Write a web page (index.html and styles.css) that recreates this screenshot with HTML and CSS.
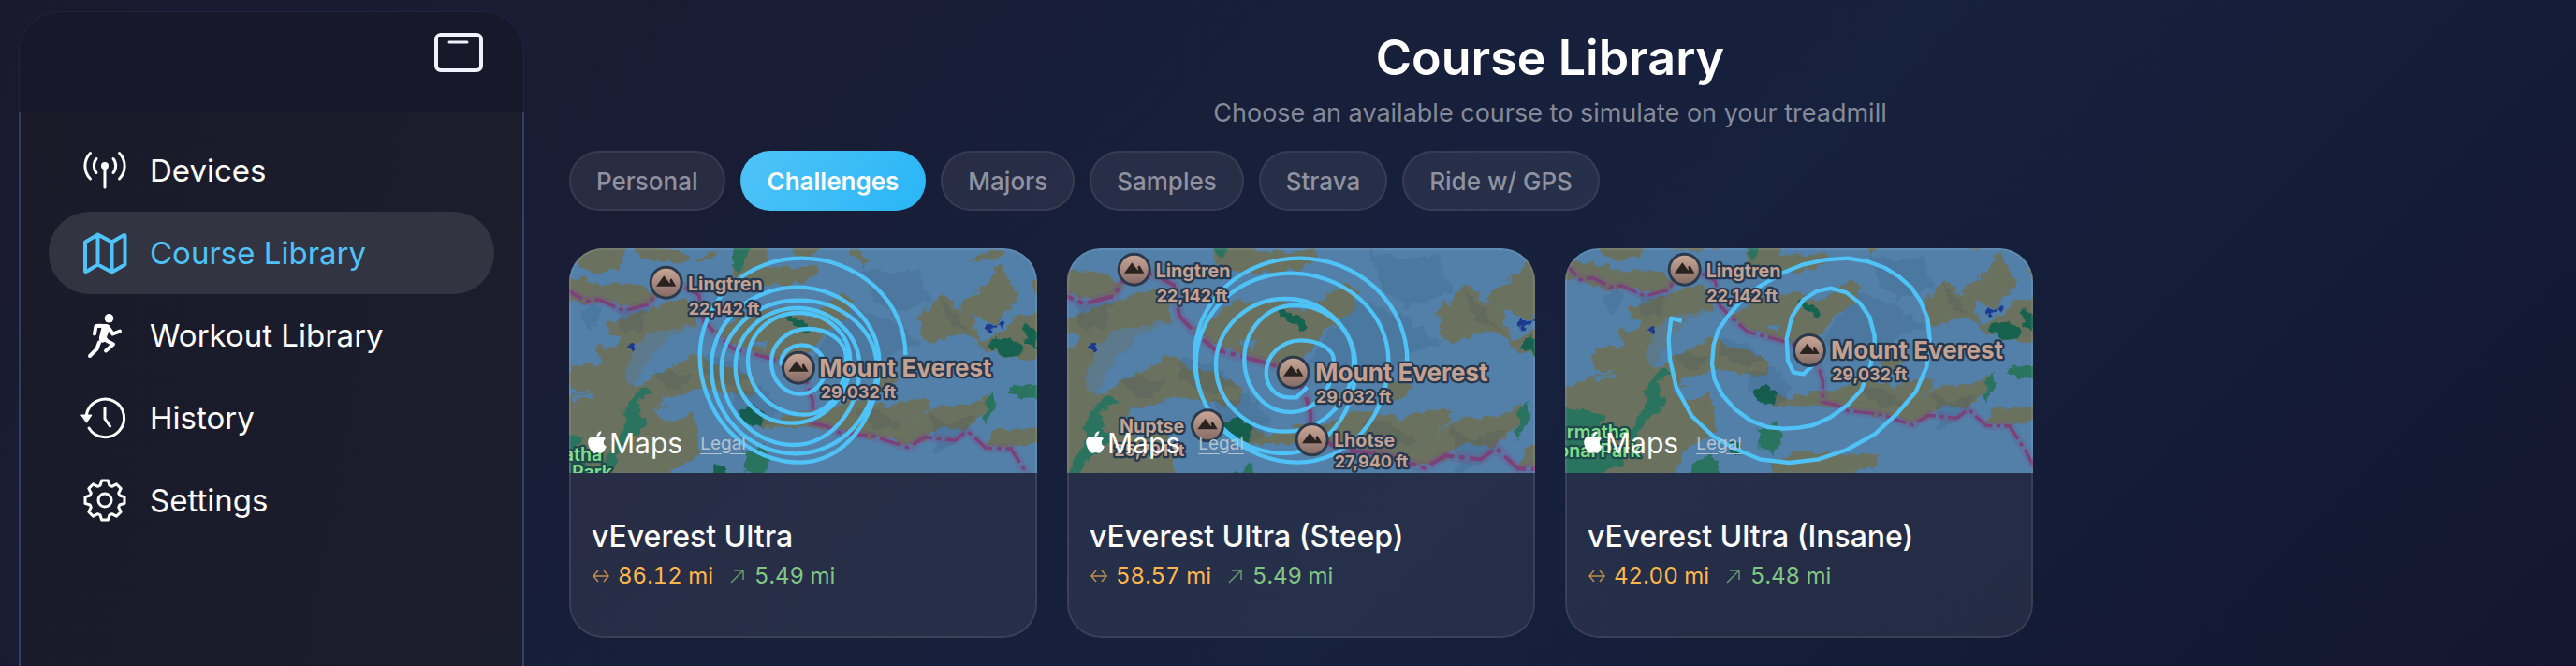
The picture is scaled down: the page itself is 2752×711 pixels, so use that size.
FILE: index.html
```html
<!DOCTYPE html>
<html lang="en">
<head>
  <meta charset="utf-8">
  <meta name="viewport" content="width=device-width, initial-scale=1.0">
  <title>Course Library</title>
  <link rel="stylesheet" href="styles.css">
</head>
<body>
  <!-- Shared map artwork -->
  <svg class="defs" width="0" height="0" aria-hidden="true">
    <defs>
      <linearGradient id="peakFill" x1="0" y1="0" x2="0" y2="1">
        <stop offset="0" stop-color="#c8a696"/>
        <stop offset="1" stop-color="#866c66"/>
      </linearGradient>
      <filter id="rough" x="-5%" y="-5%" width="110%" height="110%">
        <feTurbulence type="fractalNoise" baseFrequency="0.03" numOctaves="4" seed="4"/>
        <feDisplacementMap in="SourceGraphic" scale="36" xChannelSelector="R" yChannelSelector="G"/>
      </filter>
      <g id="peak">
        <circle r="54" fill="#2c394b"/>
        <circle r="45" fill="url(#peakFill)"/>
        <path d="M-32 12 L-7 -22 L8 -2 L14 4 L11 -8 L17 -13 L32 12Z" fill="#29231f"/>
      </g>
      <g id="terrain">
        <rect x="-120" y="-60" width="1800" height="960" fill="#5280a9"/>
        <g filter="url(#rough)">
          <g fill="#6a715f">
            <path d="M40 55 L90 20 L215 20 L180 95 L100 112 L60 85Z"/>
            <path d="M225 35 L260 20 L380 38 L405 70 L380 82 L320 70 L260 64Z"/>
            <path d="M420 65 L500 35 L495 50 L440 75Z"/>
            <path d="M-100 120 L0 115 L60 125 L120 150 L190 140 L270 150 L305 180 L290 205 L230 212 L150 202 L60 208 L-20 175 L-100 170Z"/>
            <path d="M552 10 L655 10 L660 85 L740 95 L810 80 L822 105 L790 135 L700 152 L620 150 L545 115Z"/>
            <path d="M735 10 L850 10 L800 55 L750 58Z"/>
            <path d="M920 30 L965 40 L982 70 L965 95 L945 62Z"/>
            <path d="M1305 72 L1350 40 L1430 35 L1400 62Z"/>
            <path d="M148 275 L215 250 L330 205 L400 192 L430 230 L432 280 L350 312 L290 372 L232 470 L262 462 L300 430 L350 418 L420 365 L480 400 L560 420 L622 450 L612 500 L540 500 L460 480 L330 512 L300 540 L340 530 L355 585 L420 560 L440 630 L440 690 L330 760 L280 900 L-120 900 L-120 560 L24 500 L100 492 L30 480 L24 410 L130 400 L110 350 L150 330Z"/>
            <path d="M480 300 L530 280 L590 230 L720 215 L790 250 L835 215 L905 175 L940 195 L925 228 L880 275 L820 325 L770 400 L690 395 L640 370 L560 345Z"/>
            <path d="M630 560 L700 575 L760 560 L850 540 L950 515 L1050 535 L1130 515 L1195 515 L1145 565 L1210 535 L1310 530 L1370 492 L1375 520 L1320 600 L1290 612 L1220 602 L1130 665 L1050 640 L980 632 L880 615 L780 600 L640 606Z"/>
            <path d="M1000 440 L1060 432 L1078 450 L1040 485 L1005 482Z"/>
            <path d="M1275 230 L1300 185 L1360 150 L1405 85 L1425 120 L1455 150 L1455 200 L1400 270 L1330 255Z"/>
            <path d="M1148 250 L1215 180 L1250 195 L1262 218 L1315 250 L1342 320 L1250 308 L1205 332 L1152 322Z"/>
            <path d="M1300 300 L1350 325 L1450 270 L1445 240 L1600 235 L1600 385 L1440 380 L1370 360Z"/>
            <path d="M1505 130 L1600 100 L1600 220 L1520 180Z"/>
            <path d="M1360 660 L1392 612 L1540 604 L1620 620 L1530 648 L1440 668Z"/>
            <path d="M620 790 L720 760 L1000 770 L980 810 L860 850 L640 850Z"/>
          </g>
          <g fill="#5280a9">
            <path d="M235 340 L290 300 L440 270 L440 290 L350 320 L290 380 L232 470 L200 440Z" opacity="0.6"/>
            <path d="M300 545 L390 530 L420 560 L360 590 L320 575Z"/>
            <path d="M620 325 L655 330 L650 352 L628 345Z"/>
            <path d="M30 505 L105 495 L100 510 L40 515Z"/>
            <path d="M140 300 L180 320 L170 345 L130 350Z"/>
          </g>
          <g fill="#29735f">
            <path d="M200 620 L200 550 L250 480 L292 486 L238 520 L270 600 L215 640 L160 725 L120 740Z"/>
            <path d="M550 20 L612 25 L585 70 L562 115 L548 85Z"/>
            <path d="M1430 488 L1480 465 L1620 470 L1600 520 L1500 515Z"/>
            <path d="M1350 570 L1368 515 L1392 485 L1392 530 L1370 568 L1360 600Z"/>
            <path d="M585 690 L650 655 L670 700 L640 770 L590 740Z"/>
            <path d="M-100 610 L20 620 L70 640 L30 690 L120 750 L130 800 L-100 900Z"/>
            <path d="M360 800 L430 770 L470 850 L360 860Z"/>
          </g>
          <g fill="#14624f">
            <path d="M568 550 L600 535 L648 560 L638 598 L605 600Z"/>
            <path d="M722 250 L750 245 L790 275 L790 302 L755 285Z"/>
            <path d="M1370 330 L1395 315 L1470 335 L1482 370 L1440 378 L1372 355Z"/>
            <path d="M1490 268 L1530 300 L1530 350 L1482 335Z"/>
            <path d="M490 725 L525 735 L525 770 L490 760Z"/>
          </g>
          <g fill="#1f3a8f">
            <path d="M212 345 L228 334 L238 350 L226 362Z"/>
            <path d="M1366 270 L1388 268 L1380 298 L1364 298Z"/>
            <path d="M1398 270 L1422 264 L1412 282Z"/>
          </g>
        </g>
        <!-- relief shading -->
        <g fill="#1e3046" opacity="0.1" filter="url(#rough)">
          <path d="M960 90 L1050 110 L1140 100 L1150 150 L1190 190 L1130 220 L1060 240 L1000 200 L980 150Z"/>
          <path d="M850 310 L930 220 L1060 260 L1150 340 L1070 360 L1010 420 L880 420 L800 390Z"/>
          <path d="M540 490 L640 470 L700 540 L650 600 L560 560Z"/>
          <path d="M170 220 L280 220 L250 290 L200 300Z"/>
          <path d="M470 370 L560 400 L610 450 L520 470 L450 420Z"/>
          <path d="M930 540 L1010 550 L1090 600 L1000 610 L960 570Z"/>
          <path d="M1180 560 L1240 590 L1330 560 L1300 620 L1200 690Z"/>
          <path d="M1210 185 L1260 240 L1320 300 L1240 270Z"/>
          <path d="M300 420 L420 440 L380 480 L310 460Z"/>
          <path d="M60 230 L130 210 L90 300Z"/>
        </g>
        <path class="border-glow" d="M-80 110 L-20 175 L24 168 L80 200 L120 195 L200 230 L280 210 L300 175 L335 140 L395 155 L440 180 L455 262 L490 300 L550 352 L620 370 L759 408 L790 470 L805 520 L805 590 L850 600 L890 620 L1000 632 L1110 668 L1165 635 L1260 645 L1300 615 L1360 670 L1440 672 L1490 750 L1540 840"/>
        <path class="border-line" d="M-80 110 L-20 175 L24 168 L80 200 L120 195 L200 230 L280 210 L300 175 L335 140 L395 155 L440 180 L455 262 L490 300 L550 352 L620 370 L759 408 L790 470 L805 520 L805 590 L850 600 L890 620 L1000 632 L1110 668 L1165 635 L1260 645 L1300 615 L1360 670 L1440 672 L1490 750 L1540 840"/>
      </g>
      <symbol id="apple" viewBox="0 0 20 24">
        <path d="M14.2 0.2 C14.4 1.9 13.7 3.4 12.8 4.4 C11.9 5.4 10.7 6 9.6 5.9 C9.4 4.4 10.1 2.9 11 1.9 C11.9 1 13.2 0.3 14.2 0.2Z M19.2 8.2 C17.7 9.1 16.8 10.5 16.8 12.2 C16.8 14.2 18 15.8 19.8 16.5 C19.3 18.2 18.4 19.9 17.4 21.3 C16.5 22.6 15.6 23.7 14.2 23.7 C12.8 23.7 12.3 22.9 10.6 22.9 C9 22.9 8.3 23.7 7 23.7 C5.6 23.7 4.6 22.5 3.7 21.2 C1.8 18.7 0.2 15.2 0.2 12 C0.2 8.3 2.7 6.3 5.2 6.3 C6.7 6.3 8 7.2 9.5 7.2 C10.7 7.2 12.2 6.2 14.1 6.2 C16.2 6.2 18 6.9 19.2 8.2Z" fill="#fff"/>
      </symbol>
      <symbol id="distance" viewBox="0 0 20 20">
        <path d="M2 10 H18 M7 4 L2 10 L7 16 M13 4 L18 10 L13 16"/>
      </symbol>
      <symbol id="climb" viewBox="0 0 20 20">
        <path d="M3 17 L16 4 M6 4 H16 V14"/>
      </symbol>
    </defs>
  </svg>

  <div class="app">
    <!-- Sidebar -->
    <aside class="sidebar">
      <div class="sidebar-top">
        <button class="toggle" aria-label="Toggle sidebar">
          <svg viewBox="0 0 52 42" width="52" height="42">
            <rect x="2" y="2" width="48" height="38" rx="5" stroke-width="4"/>
            <path d="M16 10 H35" stroke-width="3"/>
          </svg>
        </button>
      </div>
      <nav class="nav">
        <a class="nav-item" href="#devices">
          <svg class="icon" viewBox="0 0 48 48">
            <circle cx="24" cy="19" r="4" fill="currentColor" stroke="none"/>
            <path d="M24 20 V42" />
            <path d="M15 11.5 C11.5 15.5 11.5 22.5 15 26.5 M33 11.5 C36.5 15.5 36.5 22.5 33 26.5 M8.5 5.5 C1 13 1 25.5 8.5 33 M39.5 5.5 C47 13 47 25.5 39.5 33"/>
          </svg>
          Devices
        </a>
        <a class="nav-item active" href="#courses">
          <svg class="icon map-icon" viewBox="0 0 48 48">
            <path d="M3 12.5 L16.5 4.5 L31.5 12.5 L44 5.2 Q45.5 4.5 45.5 6 V36.5 L31.5 44.5 L16.5 36.5 L4.5 43.8 Q3 44.5 3 43Z M16.5 4.5 V36.5 M31.5 12.5 V44.5"/>
          </svg>
          Course Library
        </a>
        <a class="nav-item" href="#workouts">
          <svg class="icon" viewBox="0 0 48 48">
            <circle cx="28.5" cy="5.8" r="4.8" fill="currentColor" stroke="none"/>
            <path d="M15 12 L26 12 Q29 13 29.5 16 L26 26 L28 29 L21 32 Q17 30 18 26 L20.5 15.5 L14 16Z" fill="currentColor" stroke="none"/>
            <path d="M20 13.8 L14.5 14 L13 22.5 M27 14.5 L32.5 22.5 L40 19.6 M21 27 L33 33.5 L25 40.5" stroke-width="4"/>
            <path d="M18 31.5 L15.5 38.5 L8 46" stroke-width="4"/>
          </svg>
          Workout Library
        </a>
        <a class="nav-item" href="#history">
          <svg class="icon" viewBox="0 0 48 48">
            <path d="M7 35 A20.3 20.3 0 1 0 4.3 21"/>
            <path d="M24 13.5 V25 L29.5 33"/>
            <path d="M-1 21 H10 L4.6 29Z" fill="currentColor" stroke-width="1"/>
          </svg>
          History
        </a>
        <a class="nav-item" href="#settings">
          <svg class="icon" viewBox="0 0 48 48">
            <path d="M19 8.2 L20.6 3 H27.4 L29 8.2 L31.6 9.3 L36.4 6.8 L41.2 11.6 L38.7 16.4 L39.8 19 L45 20.6 V27.4 L39.8 29 L38.7 31.6 L41.2 36.4 L36.4 41.2 L31.6 38.7 L29 39.8 L27.4 45 H20.6 L19 39.8 L16.4 38.7 L11.6 41.2 L6.8 36.4 L9.3 31.6 L8.2 29 L3 27.4 V20.6 L8.2 19 L9.3 16.4 L6.8 11.6 L11.6 6.8 L16.4 9.3Z"/>
            <circle cx="24" cy="24" r="7"/>
          </svg>
          Settings
        </a>
      </nav>
    </aside>

    <!-- Main content -->
    <main class="main">
      <header class="header">
        <h1>Course Library</h1>
        <p>Choose an available course to simulate on your treadmill</p>
      </header>

      <div class="filters">
        <button class="chip">Personal</button>
        <button class="chip selected">Challenges</button>
        <button class="chip">Majors</button>
        <button class="chip">Samples</button>
        <button class="chip">Strava</button>
        <button class="chip">Ride w/ GPS</button>
      </div>

      <div class="courses">
        <!-- vEverest Ultra -->
        <article class="card">
          <div class="map">
            <svg class="map-art" viewBox="24 30 1500 720" preserveAspectRatio="xMidYMid slice">
              <use href="#terrain"/>
              <path class="route" d="M1102 372 A334 310 0 0 0 768 62 A325 313 0 0 0 443 375 A322 341 0 0 0 765 716 A253 321 0 0 0 1018 395 A263 240 0 0 0 755 155 A275 255 0 0 0 480 410 A270 278 0 0 0 750 688 A260 278 0 0 0 1010 410 A250 213 0 0 0 760 197 A248 218 0 0 0 512 415 A233 245 0 0 0 745 660 A210 250 0 0 0 955 410 A200 188 0 0 0 755 222 A198 188 0 0 0 557 410 A178 180 0 0 0 735 590 A190 200 0 0 0 925 390 A165 153 0 0 0 760 237 A163 153 0 0 0 597 390 A183 173 0 0 0 780 563 A132 183 0 0 0 912 380 A122 92 0 0 0 790 288 A118 107 0 0 0 672 395 A93 102 0 0 0 765 497 A80 82 0 0 0 845 415 A75 75 0 0 0 770 340 A67 60 0 0 0 703 400 L759 413"/>
              <use href="#peak" x="335" y="140"/>
              <text class="place" x="405" y="165">Lingtren</text>
              <text class="height" x="407" y="243">22,142 ft</text>
              <use href="#peak" x="759" y="413"/>
              <text class="place big" x="826" y="440">Mount Everest</text>
              <text class="height" x="830" y="509">29,032 ft</text>
              <text class="park" x="130" y="711">atha</text>
              <text class="park" x="162" y="768">Park</text>
            </svg>
            <div class="attribution">
              <svg class="apple" width="20" height="24"><use href="#apple"/></svg>
              <span class="maps">Maps</span>
              <a class="legal" href="#legal">Legal</a>
            </div>
          </div>
          <div class="card-body">
            <h2>vEverest Ultra</h2>
            <div class="stats">
              <span class="stat distance"><svg width="20" height="20"><use href="#distance"/></svg>86.12 mi</span>
              <span class="stat climb"><svg width="20" height="20"><use href="#climb"/></svg>5.49 mi</span>
            </div>
          </div>
        </article>

        <!-- vEverest Ultra (Steep) -->
        <article class="card">
          <div class="map">
            <svg class="map-art" viewBox="30 30 1500 720" preserveAspectRatio="xMidYMid slice">
              <use href="#terrain" transform="translate(-156 -68) scale(1.2)"/>
              <path class="route" d="M1120 390 A345 328 0 0 0 775 62 A337 316 0 0 0 438 378 A332 338 0 0 0 770 716 A290 326 0 0 0 1060 390 A315 280 0 0 0 745 110 A302 290 0 0 0 443 400 A282 287 0 0 0 725 687 A230 277 0 0 0 955 410 A225 218 0 0 0 730 192 A223 213 0 0 0 507 405 A223 212 0 0 0 730 617 A218 227 0 0 0 948 390 A188 177 0 0 0 760 213 A162 172 0 0 0 598 385 A147 170 0 0 0 745 555 A140 165 0 0 0 885 390 A105 65 0 0 0 780 325 A112 105 0 0 0 668 430 A72 78 0 0 0 740 508 L765 508 L800 475"/>
              <use href="#peak" x="245" y="98"/>
              <text class="place" x="314" y="124">Lingtren</text>
              <text class="height" x="317" y="202">22,142 ft</text>
              <use href="#peak" x="755" y="428"/>
              <text class="place big" x="826" y="457">Mount Everest</text>
              <text class="height" x="828" y="525">29,032 ft</text>
              <use href="#peak" x="480" y="598"/>
              <text class="place end" x="406" y="620">Nuptse</text>
              <text class="height end" x="406" y="697">25,791 ft</text>
              <use href="#peak" x="815" y="643"/>
              <text class="place" x="885" y="665">Lhotse</text>
              <text class="height" x="887" y="732">27,940 ft</text>
            </svg>
            <div class="attribution">
              <svg class="apple" width="20" height="24"><use href="#apple"/></svg>
              <span class="maps">Maps</span>
              <a class="legal" href="#legal">Legal</a>
            </div>
          </div>
          <div class="card-body">
            <h2>vEverest Ultra (Steep)</h2>
            <div class="stats">
              <span class="stat distance"><svg width="20" height="20"><use href="#distance"/></svg>58.57 mi</span>
              <span class="stat climb"><svg width="20" height="20"><use href="#climb"/></svg>5.49 mi</span>
            </div>
          </div>
        </article>

        <!-- vEverest Ultra (Insane) -->
        <article class="card">
          <div class="map">
            <svg class="map-art" viewBox="36 30 1500 720" preserveAspectRatio="xMidYMid slice">
              <use href="#terrain" transform="translate(103 -34) scale(0.943)"/>
              <path class="route" d="M410 263 L376 254 L368 320 L372 385 L392 475 L442 567 L510 632 L580 672 L660 706 L755 717 L848 706 L940 675 L1028 626 L1100 560 L1160 490 L1195 410 L1205 320 L1198 255 L1175 200 L1145 155 L1105 120 L1060 92 L1005 72 L940 62 L870 67 L800 82 L735 108 L655 155 L600 200 L560 245 L528 290 L512 340 L507 400 L515 450 L540 500 L580 545 L630 582 L685 603 L735 608 L785 605 L830 597 L885 572 L940 533 L985 485 L1012 420 L1028 340 L1028 310 L1012 250 L980 205 L938 172 L888 158 L842 168 L800 195 L763 248 L746 320 L750 390 L768 428 L800 433 L830 405"/>
              <use href="#peak" x="419" y="98"/>
              <text class="place" x="488" y="124">Lingtren</text>
              <text class="height" x="490" y="202">22,142 ft</text>
              <use href="#peak" x="819" y="357"/>
              <text class="place big" x="888" y="385">Mount Everest</text>
              <text class="height" x="891" y="453">29,032 ft</text>
              <text class="park" x="243" y="640">rmatha</text>
              <text class="park" x="278" y="698">onal Park</text>
            </svg>
            <div class="attribution">
              <svg class="apple" width="20" height="24"><use href="#apple"/></svg>
              <span class="maps">Maps</span>
              <a class="legal" href="#legal">Legal</a>
            </div>
          </div>
          <div class="card-body">
            <h2>vEverest Ultra (Insane)</h2>
            <div class="stats">
              <span class="stat distance"><svg width="20" height="20"><use href="#distance"/></svg>42.00 mi</span>
              <span class="stat climb"><svg width="20" height="20"><use href="#climb"/></svg>5.48 mi</span>
            </div>
          </div>
        </article>
      </div>
    </main>
  </div>
</body>
</html>
```

FILE: styles.css
```css
* {
  box-sizing: border-box;
}

body {
  margin: 0;
  font-family: Inter, "Liberation Sans", sans-serif;
  color: #ffffff;
  background: linear-gradient(135deg, #1a1a2e 0%, #16213e 60%, #13162e 100%);
}

h1, h2, p {
  margin: 0;
}

.defs {
  position: absolute;
}

.app {
  display: flex;
  min-height: 100vh;
}

/* Sidebar */
.sidebar {
  display: flex;
  flex-direction: column;
  flex: 0 0 540px;
  margin: 12px 0 0 20px;
}

.sidebar-top {
  display: flex;
  justify-content: flex-end;
  align-items: flex-start;
  height: 108px;
  padding: 22px 43px;
  background: #18182b;
  border: 1px solid #222240;
  border-bottom: none;
  border-radius: 44px 44px 0 0;
}

.toggle {
  padding: 0;
  background: none;
  border: none;
  cursor: pointer;
}

.toggle svg {
  display: block;
  fill: none;
  stroke: #f2f2ff;
  stroke-linecap: round;
}

.nav {
  flex: 1;
  padding: 18px 30px;
  background: linear-gradient(100deg, #1a1a29, #1b1e2d);
  border-left: 2px solid #363a66;
  border-right: 2px solid #363f68;
}

.nav-item {
  display: flex;
  align-items: center;
  gap: 24px;
  height: 88px;
  padding: 0 36px;
  border-radius: 44px;
  font-size: 33px;
  color: #ffffff;
  text-decoration: none;
}

.nav-item.active {
  background: #323442;
  color: #4fc3f7;
}

.icon {
  width: 48px;
  height: 48px;
  overflow: visible;
  fill: none;
  stroke: currentColor;
  stroke-width: 3;
  stroke-linecap: round;
  stroke-linejoin: round;
}

.map-icon {
  stroke-width: 4;
}

/* Main content */
.main {
  flex: 1;
  padding: 28px 48px 30px;
}

.header {
  text-align: center;
}

h1 {
  font-size: 52px;
  line-height: 68px;
  font-weight: 600;
}

.header p {
  margin-top: 8px;
  font-size: 27px;
  line-height: 34px;
  color: #868a98;
}

.filters {
  display: flex;
  flex-wrap: wrap;
  gap: 16px;
  margin-top: 23px;
}

.chip {
  height: 64px;
  padding: 0 27px;
  font-family: inherit;
  font-size: 26px;
  font-weight: 500;
  color: #9092a0;
  background: rgba(255, 255, 255, 0.07);
  border: 2px solid rgba(255, 255, 255, 0.07);
  border-radius: 32px;
  cursor: pointer;
}

.chip.selected {
  color: #ffffff;
  font-weight: 600;
  background: linear-gradient(120deg, #4fc3f7, #29b6f6);
  background-origin: border-box;
  border-color: transparent;
}

/* Course cards */
.courses {
  display: grid;
  grid-template-columns: repeat(auto-fill, 500px);
  gap: 32px;
  margin-top: 40px;
}

.card {
  position: relative;
  overflow: hidden;
  background: rgba(255, 255, 255, 0.07);
  border-radius: 36px;
}

/* Outline runs over the map as well */
.card::after {
  content: "";
  position: absolute;
  inset: 0;
  border: 2px solid rgba(255, 255, 255, 0.09);
  border-radius: 36px;
  pointer-events: none;
}

.map {
  position: relative;
  height: 240px;
}

.map-art {
  display: block;
  width: 100%;
  height: 100%;
}

.border-glow {
  fill: none;
  stroke: #7a4a86;
  stroke-width: 30;
  opacity: 0.25;
}

.border-line {
  fill: none;
  stroke: #7a4279;
  stroke-width: 11;
  stroke-dasharray: 70 14 14 14;
}

.route {
  fill: none;
  stroke: #4fc3f7;
  stroke-width: 13;
  stroke-linejoin: round;
}

.place,
.height,
.park {
  font-size: 59px;
  font-weight: 700;
  fill: #c4a293;
  stroke: #26384e;
  stroke-width: 14;
  stroke-linejoin: round;
  paint-order: stroke;
}

.place.big {
  font-size: 78px;
}

.height {
  font-size: 54px;
}

.end {
  text-anchor: end;
}

.park {
  font-weight: 600;
  text-anchor: end;
  fill: #7fdc8c;
  stroke: #1f4a4a;
}

.attribution {
  position: absolute;
  left: 20px;
  bottom: 16px;
  display: flex;
  align-items: center;
  gap: 3px;
}

.apple {
  margin-bottom: 2px;
}

.maps {
  font-size: 30px;
  line-height: 32px;
}

.legal {
  margin-left: 16px;
  font-size: 19px;
  color: #b4c3d2;
  text-underline-offset: 4px;
}

.card-body {
  padding: 48px 24px 50px;
}

h2 {
  font-size: 32px;
  line-height: 40px;
  font-weight: 500;
}

.stats {
  display: flex;
  gap: 16px;
  margin-top: 6px;
  font-size: 24px;
  line-height: 32px;
  font-variant-numeric: tabular-nums;
}

.stat {
  display: flex;
  align-items: center;
  gap: 8px;
}

.stat svg {
  fill: none;
  stroke: currentColor;
  stroke-width: 1.5;
  opacity: 0.7;
}

.distance {
  color: #ffb74d;
}

.climb {
  color: #81c784;
}
```
